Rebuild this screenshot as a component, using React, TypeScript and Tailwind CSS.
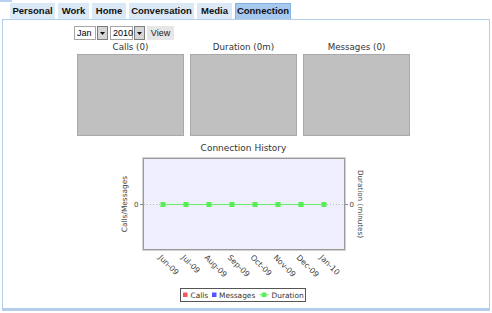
import React from "react";

const tabs = [
  { label: "Personal", w: "w-[45px]" },
  { label: "Work", w: "w-[31px]" },
  { label: "Home", w: "w-[34px]" },
  { label: "Conversation", w: "w-[65px]" },
  { label: "Media", w: "w-[35px]" },
  { label: "Connection", w: "w-[56px]", active: true },
];

const months = ["Jun-09", "Jul-09", "Aug-09", "Sep-09", "Oct-09", "Nov-09", "Dec-09", "Jan-10"];
const xs = [163, 186, 209, 232, 255, 278, 301, 324];

function Select({ value, w }: { value: string; w: string }) {
  return (
    <div className="flex h-[14px] items-stretch">
      <div className={`${w} flex items-center border border-[#a6a6a6] bg-white pl-[2px] text-[9px] leading-none`}>
        {value}
      </div>
      <div className="ml-[1px] flex w-[11px] items-center justify-center border border-[#7d7d7d] bg-[#d6d6d6]">
        <svg width="5" height="3" viewBox="0 0 5 3">
          <path d="M0 0 H5 L2.5 3 Z" fill="#111" />
        </svg>
      </div>
    </div>
  );
}

function EmptyBox({ title }: { title: string }) {
  return (
    <div className="flex w-[107px] flex-col items-center">
      <div className="h-[14px] text-[8.7px] leading-[14px] text-[#333]" style={{ fontFamily: "'DejaVu Sans', sans-serif" }}>
        {title}
      </div>
      <div className="h-[82px] w-[107px] border border-[#a9a9a9] bg-[#c0c0c0]" />
    </div>
  );
}

function HistoryChart() {
  const font = "'DejaVu Sans', sans-serif";
  return (
    <svg width="270" height="165" viewBox="110 140 270 165" style={{ fontFamily: font }}>
      <text x="243.5" y="151" textAnchor="middle" fontSize="9" fill="#333">
        Connection History
      </text>
      <rect x="142.5" y="157.5" width="203" height="93" fill="none" stroke="#d2d2d2" />
      <rect x="143.5" y="158.5" width="201" height="91" fill="#eeeefc" stroke="#9a9a9a" />
      <line x1="144" x2="344" y1="204.5" y2="204.5" stroke="#bdbdbd" strokeDasharray="1 2" />
      <line x1="140" x2="143" y1="204.5" y2="204.5" stroke="#888" />
      <line x1="345" x2="348" y1="204.5" y2="204.5" stroke="#888" />
      <text x="138.5" y="207" textAnchor="end" fontSize="7" fill="#444">0</text>
      <text x="349.5" y="207" fontSize="7" fill="#444">0</text>
      <text transform="translate(127 204) rotate(-90)" textAnchor="middle" fontSize="7.4" fill="#444">
        Calls/Messages
      </text>
      <text transform="translate(358 204) rotate(90)" textAnchor="middle" fontSize="7.2" fill="#444">
        Duration (minutes)
      </text>
      <line x1={xs[0]} x2={xs[xs.length - 1]} y1="204.5" y2="204.5" stroke="#66ee66" />
      {xs.map((x) => (
        <rect key={x} x={x - 2.5} y="202" width="5" height="5" fill="#55ee55" />
      ))}
      {months.map((m, i) => (
        <text key={m} transform={`translate(${xs[i] - 5} 258) rotate(45)`} fontSize="7.8" fill="#444">
          {m}
        </text>
      ))}
      <rect x="180.5" y="288.5" width="125" height="13" fill="#fff" stroke="#555" />
      <rect x="183" y="292.5" width="4.5" height="4.5" fill="#ff5555" />
      <text x="190.5" y="298" fontSize="7.4" fill="#333">Calls</text>
      <rect x="212" y="292.5" width="4.5" height="4.5" fill="#5555ff" />
      <text x="219" y="298" fontSize="7.4" fill="#333">Messages</text>
      <line x1="259.5" x2="268.5" y1="294.75" y2="294.75" stroke="#55ee55" />
      <rect x="261.75" y="292.5" width="4.5" height="4.5" fill="#55ee55" />
      <text x="271.5" y="298" fontSize="7.4" fill="#333">Duration</text>
    </svg>
  );
}

export default function App() {
  return (
    <div className="relative h-[313px] w-[492px] overflow-hidden bg-white" style={{ fontFamily: "'Liberation Sans', Arial, sans-serif" }}>
      <div className="absolute left-0 top-0 h-[2px] w-[12px] bg-[#b9d1ee]" />
      <div className="flex h-[19px] items-end gap-[3px] pl-[10px]">
        {tabs.map((t) => (
          <div
            key={t.label}
            className={`${t.w} flex h-[16px] items-center justify-center text-[9.5px] font-bold text-[#111] ${
              t.active ? "border border-b-0 border-[#86b0de] bg-[#a7c9ef]" : "bg-[#dbe8f6]"
            }`}
          >
            {t.label}
          </div>
        ))}
      </div>
      <div className="ml-[2px] h-[292px] w-[488px] border border-b-[3px] border-[#b4cdea]">
        <div className="flex items-center gap-[2px] pl-[71px] pt-[6px]">
          <Select value="Jan" w="w-[22px]" />
          <Select value="2010" w="w-[23px]" />
          <div className="flex h-[14px] w-[27px] items-center justify-center bg-[#e6e6e6] text-[9px] leading-none text-[#222]">
            View
          </div>
        </div>
        <div className="ml-[74px] flex gap-[6px]">
          <EmptyBox title="Calls (0)" />
          <EmptyBox title="Duration (0m)" />
          <EmptyBox title="Messages (0)" />
        </div>
        <div className="ml-[107px] mt-[4px]">
          <HistoryChart />
        </div>
      </div>
    </div>
  );
}
